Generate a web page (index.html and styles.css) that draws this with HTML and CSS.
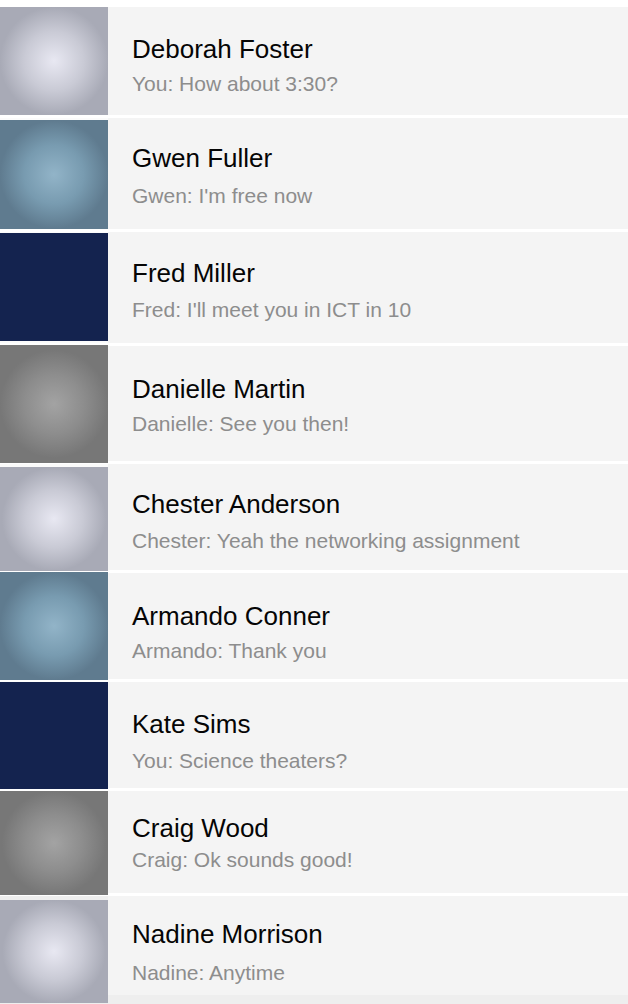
FILE: index.html
```html
<!DOCTYPE html>
<html lang="en">
<head>
<meta charset="utf-8">
<title>Messages</title>
<link rel="stylesheet" href="styles.css">
</head>
<body>
<ul class="threads">
  <li class="thread">
    <div class="avatar avatar-silver"></div>
    <div class="panel"><div class="name">Deborah Foster</div><div class="preview">You: How about 3:30?</div></div>
  </li>
  <li class="thread">
    <div class="avatar avatar-steel"></div>
    <div class="panel"><div class="name">Gwen Fuller</div><div class="preview">Gwen: I'm free now</div></div>
  </li>
  <li class="thread">
    <div class="avatar avatar-navy"></div>
    <div class="panel"><div class="name">Fred Miller</div><div class="preview">Fred: I'll meet you in ICT in 10</div></div>
  </li>
  <li class="thread">
    <div class="avatar avatar-grey"></div>
    <div class="panel"><div class="name">Danielle Martin</div><div class="preview">Danielle: See you then!</div></div>
  </li>
  <li class="thread">
    <div class="avatar avatar-silver"></div>
    <div class="panel"><div class="name">Chester Anderson</div><div class="preview">Chester: Yeah the networking assignment</div></div>
  </li>
  <li class="thread">
    <div class="avatar avatar-steel"></div>
    <div class="panel"><div class="name">Armando Conner</div><div class="preview">Armando: Thank you</div></div>
  </li>
  <li class="thread">
    <div class="avatar avatar-navy"></div>
    <div class="panel"><div class="name">Kate Sims</div><div class="preview">You: Science theaters?</div></div>
  </li>
  <li class="thread">
    <div class="avatar avatar-grey"></div>
    <div class="panel"><div class="name">Craig Wood</div><div class="preview">Craig: Ok sounds good!</div></div>
  </li>
  <li class="thread thread-last">
    <div class="avatar avatar-silver"></div>
    <div class="panel"><div class="name">Nadine Morrison</div><div class="preview">Nadine: Anytime</div></div>
  </li>
</ul>
</body>
</html>
```

FILE: styles.css
```css
html {
  background: #eeeeee;
}

body {
  margin: 0;
  padding: 0;
  background: #eeeeee;
  font-family: "Liberation Sans", Arial, sans-serif;
}

.threads {
  list-style: none;
  margin: 0;
  padding: 7px 0 0 0;
  background: #ffffff;
  display: flex;
  flex-direction: column;
  gap: 3px;
}

.thread {
  display: flex;
  height: 108px;
  background: #fbfbfb;
}

.avatar {
  flex: 0 0 108px;
  width: 108px;
  height: 108px;
  align-self: flex-start;
}

.avatar-silver {
  background: radial-gradient(circle closest-side at 50% 50%, #e8e8f2 0%, #c9cad5 55%, #a8aab6 100%);
}
.avatar-steel {
  background: radial-gradient(circle closest-side at 50% 50%, #92b4c8 0%, #789bb0 55%, #5f7b8f 100%);
}
.avatar-navy {
  background: #14234f;
}
.avatar-grey {
  background: radial-gradient(circle closest-side at 50% 50%, #a3a3a3 0%, #8d8d8d 55%, #777777 100%);
}

.panel {
  flex: 1;
  background: #f4f4f4;
  padding: 27px 0 0 24px;
  box-sizing: border-box;
}

.name {
  font-size: 26px;
  line-height: 30px;
  color: #050505;
}

.preview {
  margin-top: 10px;
  font-size: 21px;
  line-height: 24px;
  color: #8d8d8d;
}

/* row heights, avatar offsets and text spacing */
.thread:nth-child(1) { height: 108px; }
.thread:nth-child(1) .avatar { height: 108px; }
.thread:nth-child(1) .preview { margin-top: 8px; }

.thread:nth-child(2) { height: 111px; }
.thread:nth-child(2) .avatar { margin-top: 2px; height: 109px; }
.thread:nth-child(2) .panel { padding-top: 25px; }
.thread:nth-child(2) .preview { margin-top: 11px; }

.thread:nth-child(3) { height: 111px; }
.thread:nth-child(3) .avatar { margin-top: 1px; height: 108px; }
.thread:nth-child(3) .panel { padding-top: 26px; }

.thread:nth-child(4) { height: 115px; }
.thread:nth-child(4) .avatar { margin-top: -1px; height: 118px; }
.thread:nth-child(4) .panel { padding-top: 28px; }
.thread:nth-child(4) .preview { margin-top: 8px; }

.thread:nth-child(5) { height: 106px; }
.thread:nth-child(5) .avatar { margin-top: 3px; height: 104px; }
.thread:nth-child(5) .panel { padding-top: 25px; }

.thread:nth-child(6) { height: 106px; }
.thread:nth-child(6) .avatar { margin-top: -1px; height: 108px; }
.thread:nth-child(6) .panel { padding-top: 28px; }
.thread:nth-child(6) .preview { margin-top: 8px; }

.thread:nth-child(7) { height: 106px; }
.thread:nth-child(7) .avatar { height: 107px; }
.thread:nth-child(7) .panel { padding-top: 27px; }

.thread:nth-child(8) { height: 102px; }
.thread:nth-child(8) .avatar { height: 104px; }
.thread:nth-child(8) .panel { padding-top: 22px; }
.thread:nth-child(8) .preview { margin-top: 5px; }

/* last row: avatar runs past the panel onto the page background */
.thread-last {
  height: 107px;
  background: #eeeeee;
}
.thread-last .avatar { margin-top: 4px; height: 103px; }
.thread-last .panel {
  align-self: flex-start;
  height: 99px;
  padding-top: 23px;
}
.thread-last .preview { margin-top: 12px; }
```
